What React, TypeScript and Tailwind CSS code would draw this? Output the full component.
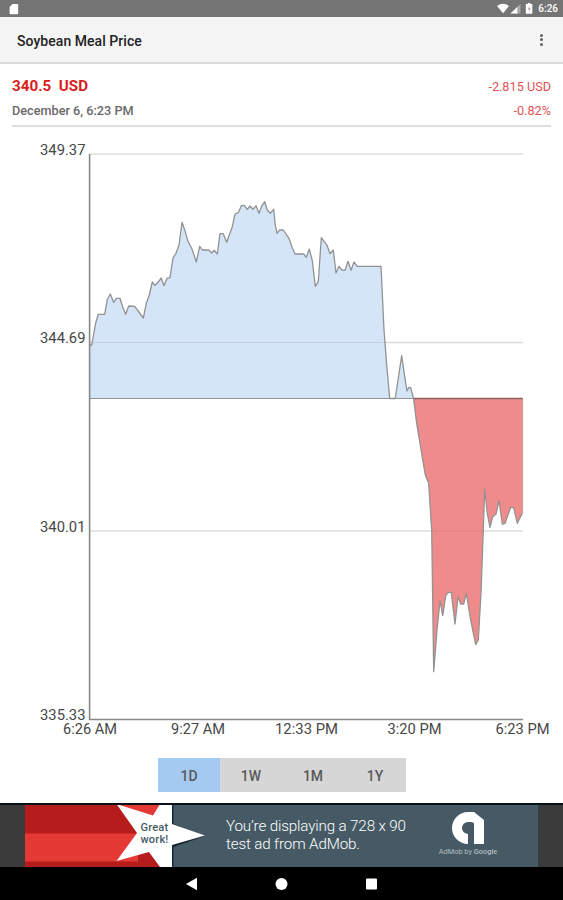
import React, { useState } from 'react';

type Point = [number, number];

const BASELINE = 398.5;

// Intraday price line, above the previous close
const gainPoints: Point[] = [
  [90, 345], [91.7, 345], [95.7, 323], [98.3, 314.3], [104.7, 314.3], [107.3, 299.3], [110.3, 294], [113.7, 302.3],
  [116.3, 298.3], [120, 298.3], [122.7, 307], [125.7, 314.3], [128.7, 306], [134.7, 306.3], [139.3, 312.5],
  [143.3, 318], [146.3, 303.3], [149.3, 295], [152.3, 282], [155, 285.3], [158, 282.3], [161.3, 278],
  [164, 285.7], [167, 278.3], [170, 277.7], [173, 258], [176, 253.3], [179, 245], [182, 222.3], [185, 230.7],
  [187.7, 240.7], [191.7, 248.3], [196.3, 262], [199.7, 246.3], [202.3, 250], [208.7, 250], [211.7, 253],
  [214.3, 250.3], [217.3, 254], [220, 233.7], [223.3, 233.7], [226.7, 242.3], [232.3, 226.7], [235, 214],
  [238.3, 212.7], [241.3, 205.7], [244.3, 205.3], [247.3, 209.3], [250, 206], [253, 209.3], [256, 205.7],
  [259, 213.3], [262, 205.7], [264.7, 201.7], [267.3, 210], [270.3, 213.3], [273.7, 209.3], [275, 223.3],
  [277, 233.3], [279.7, 230], [283.3, 230], [289, 238.3], [292, 247.3], [295, 254], [303.7, 254],
  [306.3, 257.3], [309.3, 249], [312.3, 260.7], [315.3, 286.3], [318.3, 281.7], [321.3, 237.7], [327, 245.3],
  [330, 253.7], [333.3, 250], [336, 273], [339, 266.3], [342, 270], [345, 270.3], [348, 261.3], [351, 270.3],
  [354, 262], [357.3, 266.3], [381, 266.3], [384, 330], [386.7, 365], [389.7, 398.5], [395.3, 398.5],
  [398, 380], [401.7, 355.7], [404.7, 376.7], [407, 391], [409, 387.3], [410.7, 387.7], [413.5, 398.5],
];

// The same line once it drops below the previous close
const lossPoints: Point[] = [
  [413.5, 398.5], [416.7, 423.3], [422.3, 457.3], [425.3, 475], [428.7, 483.3], [431, 520], [431.7, 530],
  [433.7, 671.7], [437, 630], [440, 600.7], [442.7, 615.7], [445.7, 595.7], [448.3, 592.3], [451.3, 592.3],
  [455, 624], [458, 596.7], [460.7, 604], [463.7, 604], [466.3, 593.3], [470.7, 620], [475.7, 644.7],
  [478.3, 640], [481, 593], [483.3, 530], [484.7, 489], [487.3, 513.3], [490, 527.3], [492.7, 516.7],
  [496, 514], [499, 500.7], [502.3, 524], [505, 523.3], [510.7, 507.3], [513.7, 507.7], [517.3, 523.3],
  [522.3, 513.3],
];

const yTicks = [
  { label: '349.37', y: 154 },
  { label: '344.69', y: 342.5 },
  { label: '340.01', y: 531 },
  { label: '335.33', y: 719.5 },
];

const xTicks = [
  { label: '6:26 AM', x: 90, width: 54 },
  { label: '9:27 AM', x: 198, width: 54 },
  { label: '12:33 PM', x: 306.5, width: 63 },
  { label: '3:20 PM', x: 414.5, width: 54 },
  { label: '6:23 PM', x: 522.5, width: 54 },
];

const ranges = ['1D', '1W', '1M', '1Y'];

const toPath = (points: Point[]) => points.map(p => p.join(' ')).join(' L');

function StatusBar() {
  return (
    <div className="h-[17px] shrink-0 bg-[#757575] flex items-center justify-between pl-[9px] pr-[5px]">
      <svg width="10" height="12" viewBox="0 0 10 12" fill="#fff">
        <path d="M3.5 1H8.3Q9.2 1 9.2 2V10.2Q9.2 11.2 8.3 11.2H1.5Q.6 11.2 .6 10.2V4Z" />
      </svg>
      <div className="flex items-center">
        <svg width="40" height="13" viewBox="0 0 40 13">
          <path d="M0 4Q6-.6 12 4L6 11.3Z" fill="#fff" />
          <path d="M23.5 1.7V11.5H13.5Z" fill="#a8a8a8" />
          <path d="M20.3 4.9V11.5H13.5Z" fill="#fff" />
          <path d="M30.8 1H33.3V2H35.3V11.7H28.8V2H30.8Z" fill="#fff" />
          <path d="M32.4 3.9L30.8 7.2H31.9V9.8L33.6 6.4H32.4Z" fill="#a0a0a0" />
        </svg>
        <span className="ml-px text-[10px] leading-[13px] font-medium text-white">6:26</span>
      </div>
    </div>
  );
}

function PriceChart() {
  return (
    <svg className="block shrink-0" width="563" height="631" viewBox="0 127 563 631">
      <g stroke="#dcdcdc" strokeWidth="1.3">
        {yTicks.slice(0, 3).map(t => (
          <line key={t.label} x1="90" x2="523" y1={t.y} y2={t.y} />
        ))}
      </g>
      <path d={`M90 ${BASELINE} L${toPath(gainPoints)} Z`} fill="#d4e5f7" />
      <path d={`M${toPath(lossPoints)} L522.3 ${BASELINE} Z`} fill="#f08b8b" />
      <line x1="90" x2="386" y1="342.5" y2="342.5" stroke="#c6d3df" strokeWidth="1" />
      <line x1="432" x2="483.5" y1="531" y2="531" stroke="#dc8283" strokeWidth="1" />
      <g fill="none" stroke="#929292" strokeWidth="1.3" strokeLinejoin="round">
        <path d={`M${toPath(gainPoints)}`} />
        <path d={`M${toPath(lossPoints)}`} />
      </g>
      <path d={`M90 ${BASELINE}H414`} stroke="#8d949b" strokeWidth="1.2" />
      <path d={`M414 ${BASELINE}H523`} stroke="#8f6464" strokeWidth="1.3" />
      <path d="M522.6 398.5V513" stroke="#c08080" strokeWidth=".8" />
      <path d="M89.6 154V719.5H523" fill="none" stroke="#888" strokeWidth="1.6" />
      <g className="font-['Roboto',sans-serif] text-[14px]" fill="#474747">
        {yTicks.map(t => (
          <text key={t.label} x="40" y={t.y + 0.5} textLength="45.5" lengthAdjust="spacingAndGlyphs">
            {t.label}
          </text>
        ))}
        {xTicks.map(t => (
          <text
            key={t.label}
            x={t.x}
            y="734"
            textAnchor="middle"
            textLength={t.width}
            lengthAdjust="spacingAndGlyphs"
          >
            {t.label}
          </text>
        ))}
      </g>
    </svg>
  );
}

function AdBanner() {
  return (
    <div className="h-16 shrink-0 bg-[#3b3b3b] border-t-2 border-[#071116] pl-[25px]">
      <div className="w-[513px] h-full flex bg-[#455a64] text-white">
        <div className="relative w-[180px] shrink-0">
          <svg className="block" width="180" height="62" viewBox="0 0 180 62">
            <path d="M0 0H147V62H0Z" fill="#b71c1c" />
            <path d="M91 0H136L128 11Z" fill="#e53935" />
            <path d="M0 28.5H113V56.5H0Z" fill="#e53935" />
            <path d="M147 0H148.5V19L180 31L148.5 42V62H147Z" fill="#14262e" />
            <path
              d="M91.5 -1L128 10.5L135 -1H147V19L180 30.5L147 40V62H135L124 47L91.5 56L112 28Z"
              fill="#fff"
            />
          </svg>
          <div className="absolute left-[115.5px] top-[17px] w-[32px] text-[11px] leading-[12px] text-[#455a64] font-medium tracking-[0.2px]">
            Great
            <br />
            work!
          </div>
        </div>
        <div className="w-[206px] pl-[21px] pt-[12px] text-[15.2px] leading-[18px] tracking-[-0.15px] font-light whitespace-nowrap">
          You’re displaying a 728 x 90
          <br />
          test ad from AdMob.
        </div>
        <div className="w-[114px] flex flex-col items-center pt-[7px]">
          <svg width="32" height="32" viewBox="0 0 32 32" fill="#fff">
            <path d="M16 0H22L32 8V32H22V12Q22 10 19 10H16A6 6 0 0 0 10 16Q10 21 16 22V32A16 16 0 0 1 16 0Z" />
          </svg>
          <div className="mt-[3px] text-[7.4px] leading-[10px] text-[#b3bdc1] whitespace-nowrap">
            AdMob by <span className="font-medium">Google</span>
          </div>
        </div>
      </div>
    </div>
  );
}

export default function App() {
  const [range, setRange] = useState('1D');

  return (
    <div className="w-[563px] h-[900px] overflow-hidden bg-white flex flex-col font-['Roboto',sans-serif]">
      <StatusBar />

      <header className="h-[47px] shrink-0 bg-[#f5f5f5] border-b-2 border-[#dcdcdc] flex items-center justify-between pl-[17px] pr-[20px]">
        <h1 className="text-[14px] leading-5 font-medium text-[#222] tracking-[0.05px] pt-[2px]">Soybean Meal Price</h1>
        <button aria-label="More options" className="flex flex-col gap-[1.5px]">
          <span className="size-[3px] rounded-full bg-[#616161]" />
          <span className="size-[3px] rounded-full bg-[#616161]" />
          <span className="size-[3px] rounded-full bg-[#616161]" />
        </button>
      </header>

      {/* Last quote and daily change */}
      <section className="h-[63px] shrink-0 mx-3 border-b-2 border-[#dfdfdf] pt-[12px]">
        <div className="flex justify-between items-center h-5">
          <span className="text-[15.2px] font-bold text-[#d91e1e] whitespace-pre">340.5  USD</span>
          <span className="text-[12.7px] text-[#e25353] pt-0.5">-2.815 USD</span>
        </div>
        <div className="flex justify-between items-center h-5 mt-[5px]">
          <span className="text-[12.7px] font-medium text-[#6a6a6a]">December 6, 6:23 PM</span>
          <span className="text-[12.7px] text-[#e25353]">-0.82%</span>
        </div>
      </section>

      <PriceChart />

      <div className="w-[248px] h-[34px] shrink-0 ml-[158px] grid grid-cols-4">
        {ranges.map(r => (
          <button
            key={r}
            onClick={() => setRange(r)}
            className={`text-[14px] font-medium text-[#595959] pt-0.5 ${r === range ? 'bg-[#a5caf1]' : 'bg-[#d6d6d6]'}`}
          >
            {r}
          </button>
        ))}
      </div>

      <div className="flex-1" />
      <AdBanner />

      <nav className="h-[33px] shrink-0 bg-black flex items-center pl-[186px]">
        <svg width="192" height="14" viewBox="0 0 192 14" fill="#fff">
          <path d="M0 7L11 .7V13.3Z" />
          <circle cx="95.5" cy="7" r="6" />
          <rect x="180" y="1.5" width="11" height="11" rx="1" />
        </svg>
      </nav>
    </div>
  );
}
